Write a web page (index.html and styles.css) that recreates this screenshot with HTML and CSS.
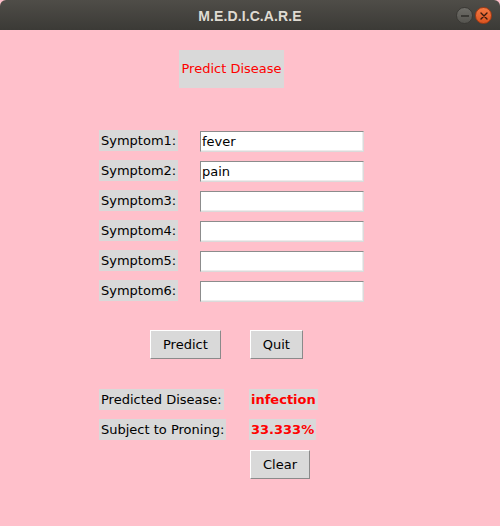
FILE: index.html
```html
<!DOCTYPE html>
<html>
<head>
<meta charset="utf-8">
<link rel="stylesheet" href="styles.css">
</head>
<body>
<div class="window">
  <div class="titlebar">
    <div class="tb-side"></div>
    <div class="tb-title">M.E.D.I.C.A.R.E</div>
    <div class="tb-side tb-controls">
      <span class="ctl ctl-min"><span class="dash"></span></span>
      <span class="ctl ctl-close">
        <svg width="8" height="8" viewBox="0 0 8 8"><path d="M1 1 L7 7 M7 1 L1 7" stroke="#3a1a0e" stroke-width="1.4" stroke-linecap="round"/></svg>
      </span>
    </div>
  </div>
  <div class="content">
    <div class="heading">Predict Disease</div>

    <div class="form">
      <span class="lbl">Symptom1:</span><input class="entry" type="text" value="fever">
      <span class="lbl">Symptom2:</span><input class="entry" type="text" value="pain">
      <span class="lbl">Symptom3:</span><input class="entry" type="text" value="">
      <span class="lbl">Symptom4:</span><input class="entry" type="text" value="">
      <span class="lbl">Symptom5:</span><input class="entry" type="text" value="">
      <span class="lbl">Symptom6:</span><input class="entry" type="text" value="">
    </div>

    <div class="actions">
      <button class="btn">Predict</button>
      <button class="btn">Quit</button>
    </div>

    <div class="results">
      <span class="lbl">Predicted Disease:</span><span class="lbl value">infection</span>
      <span class="lbl">Subject to Proning:</span><span class="lbl value">33.333%</span>
      <span></span><button class="btn clear">Clear</button>
    </div>
  </div>
</div>
</body>
</html>
```

FILE: styles.css
```css
html, body {
  margin: 0;
  padding: 0;
  background: #ffc0cb;
}
body {
  width: 500px;
  height: 526px;
  overflow: hidden;
  font-family: "DejaVu Sans", sans-serif;
  font-size: 13px;
  color: #000;
}
.window {
  display: flex;
  flex-direction: column;
  height: 526px;
}
.titlebar {
  height: 30px;
  flex: none;
  display: grid;
  grid-template-columns: 1fr auto 1fr;
  align-items: center;
  background: linear-gradient(#4f4d48, #3b3a36);
  border-radius: 6px 6px 0 0;
}
.tb-title {
  font-family: "Liberation Sans", Arial, sans-serif;
  font-weight: bold;
  font-size: 14px;
  color: #dfdbd2;
  letter-spacing: 0.1px;
  padding-top: 1px;
}
.tb-controls {
  display: flex;
  justify-content: flex-end;
  align-items: center;
  gap: 2px;
  padding-right: 8px;
  padding-top: 1px;
}
.ctl {
  width: 17px;
  height: 17px;
  border-radius: 50%;
  display: flex;
  align-items: center;
  justify-content: center;
  box-sizing: border-box;
}
.ctl-min {
  background: linear-gradient(#6e6d68, #55544f);
  border: 1px solid #3a3935;
}
.ctl-min .dash {
  width: 8px;
  height: 2px;
  background: #3a3935;
}
.ctl-close {
  background: linear-gradient(#f47a44, #dc5420);
  border: 1px solid #a63a12;
}
.content {
  flex: 1;
  background: #ffc0cb;
  display: flex;
  flex-direction: column;
  align-items: flex-start;
}
.heading {
  margin: 20px 0 0 179px;
  background: #d9d9d9;
  color: #ff0000;
  padding: 0 2px;
  height: 38px;
  line-height: 38px;
  width: 101px;
  text-align: center;
}
.form {
  margin: 42px 0 0 99px;
  display: grid;
  grid-template-columns: 101px 164px;
  grid-auto-rows: 21px;
  row-gap: 9px;
  align-items: start;
}
.lbl {
  display: inline-block;
  justify-self: start;
  background: #d9d9d9;
  height: 21px;
  line-height: 21px;
  padding: 0 2px;
  white-space: nowrap;
}
.entry {
  margin: 1px 0 0 0;
  box-sizing: border-box;
  width: 164px;
  height: 21px;
  padding: 0 1px;
  background: #fff;
  border: 1px solid;
  border-color: #8c8c8c #dadada #dadada #8c8c8c;
  box-shadow: inset -1px -1px 0 #ececec;
  font-family: "DejaVu Sans", sans-serif;
  font-size: 13px;
  color: #000;
  outline: none;
}
.actions {
  margin: 29px 0 0 150px;
  display: flex;
  gap: 29px;
}
.btn {
  box-sizing: border-box;
  height: 29px;
  padding: 0 12px;
  background: #d9d9d9;
  border: 1px solid;
  border-color: #ffffff #8a8a8a #8a8a8a #ffffff;
  font-family: "DejaVu Sans", sans-serif;
  font-size: 13px;
  color: #000;
  line-height: 27px;
  border-radius: 0;
}
.results {
  margin: 30px 0 0 99px;
  display: grid;
  grid-template-columns: 150px auto;
  grid-auto-rows: 21px;
  row-gap: 9px;
  align-items: start;
}
.value {
  color: #ff0000;
  font-weight: bold;
}
.clear {
  margin: 1px 0 0 1px;
  justify-self: start;
}
```
